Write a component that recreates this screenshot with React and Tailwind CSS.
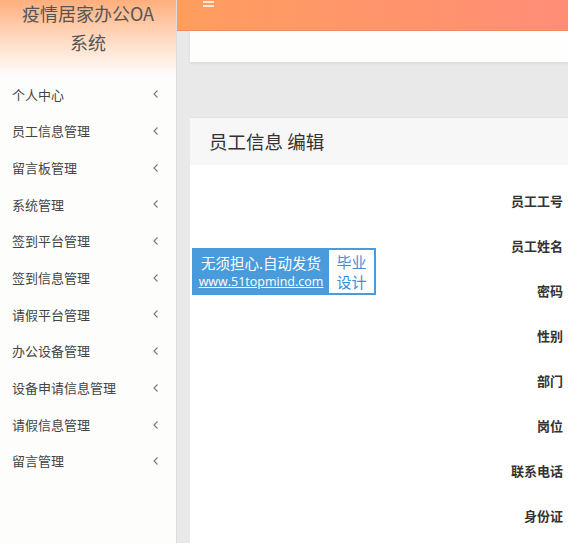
import React from "react";

const menu = [
  "个人中心",
  "员工信息管理",
  "留言板管理",
  "系统管理",
  "签到平台管理",
  "签到信息管理",
  "请假平台管理",
  "办公设备管理",
  "设备申请信息管理",
  "请假信息管理",
  "留言管理",
];

const fields = ["员工工号", "员工姓名", "密码", "性别", "部门", "岗位", "联系电话", "身份证"];

function Chevron() {
  return (
    <svg width="8" height="10" viewBox="0 0 8 10" className="text-[#777]">
      <path d="M5.5 1.5 L2 5 L5.5 8.5" fill="none" stroke="currentColor" strokeWidth="1.1" />
    </svg>
  );
}

export default function App() {
  return (
    <div
      className="relative flex h-[543px] w-[568px] overflow-hidden bg-[#e9e9e9]"
      style={{ fontFamily: '"Noto Sans CJK SC", "Noto Sans", sans-serif' }}
    >
      {/* Sidebar */}
      <aside className="flex h-full w-[177px] shrink-0 flex-col border-r border-[#dcdcdc] bg-[#fdfdfc]">
        <div className="h-[76px] bg-gradient-to-b from-[#ffae7c] via-[#ffd9bf] to-[#fdfdfc] px-2 text-center">
          <div className="-mt-[1px] text-[18px] leading-[29px] text-[#555]">疫情居家办公OA</div>
          <div className="text-[18px] leading-[29px] text-[#555]">系统</div>
        </div>
        <nav className="flex flex-col">
          {menu.map((m) => (
            <div key={m} className="flex h-[36.7px] items-center justify-between pl-3 pr-4 text-[13px] text-[#444]">
              <span>{m}</span>
              <Chevron />
            </div>
          ))}
        </nav>
      </aside>

      {/* Main */}
      <div className="flex min-w-0 flex-1 flex-col">
        <header className="relative h-[31px] shrink-0 border-b border-[#f08a62] bg-gradient-to-r from-[#ff9d5e] to-[#ff8d76]">
          <div className="absolute left-[26px] top-[-3px] flex w-[11px] flex-col gap-[2px]">
            <span className="h-[2px] bg-[#ffe6d4]" />
            <span className="h-[2px] bg-[#ffe6d4]" />
            <span className="h-[2px] bg-[#ffe6d4]" />
          </div>
        </header>
        <div className="flex flex-1 flex-col pl-[13px]">
          <div className="h-[32px] shrink-0 border-b border-[#dedede] bg-[#fefefc] shadow-[0_1px_2px_rgba(0,0,0,0.06)]" />
          <div className="mt-[54px] flex flex-1 flex-col border-t border-[#e2e2e2] bg-white">
            <div className="flex h-[47px] items-center bg-[#f7f7f7] pl-[19px] text-[18.5px] text-[#333]">
              员工信息 编辑
            </div>
            <div className="flex flex-col pt-[13px]">
              {fields.map((f) => (
                <div key={f} className="flex h-[45px] items-center justify-end pr-[5px] text-[13px] font-bold text-[#333]">
                  {f}
                </div>
              ))}
            </div>
          </div>
        </div>
      </div>

      {/* Watermark */}
      <div className="absolute left-[192px] top-[248px] flex h-[47px] w-[184px] items-center gap-[2px] bg-[#4a9bdb] pl-[3px] pr-[2px]">
        <div className="flex flex-1 flex-col items-center text-white">
          <div className="text-[14.5px] leading-[20px]">无须担心.自动发货</div>
          <div className="text-[12.5px] leading-[18px] underline" style={{ fontFamily: '"Open Sans", "Noto Sans", sans-serif' }}>
            www.51topmind.com
          </div>
        </div>
        <div className="flex h-[43px] w-[45px] flex-col items-center justify-center bg-white text-[15px] text-[#3c8fd6]">
          <span className="block leading-[20px]">毕业</span>
          <span className="block leading-[20px]">设计</span>
        </div>
      </div>
    </div>
  );
}
